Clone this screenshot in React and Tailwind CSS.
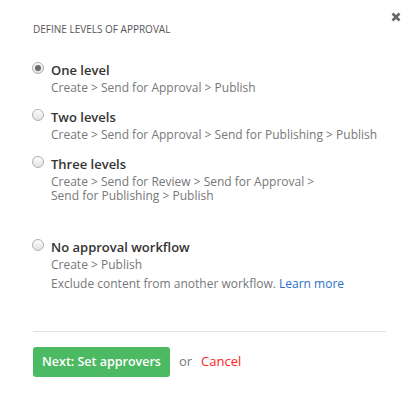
import React from "react";

const options = [
  { label: "One level", lines: ["Create > Send for Approval > Publish"], checked: true },
  { label: "Two levels", lines: ["Create > Send for Approval > Send for Publishing > Publish"] },
  {
    label: "Three levels",
    lines: ["Create > Send for Review > Send for Approval >", "Send for Publishing > Publish"],
  },
];

const Radio = ({ checked }) => (
  <span className="ml-[-1px] mt-[1px] flex h-[12px] w-[12px] shrink-0 items-center justify-center rounded-full border border-[#b0b0b0] bg-gradient-to-b from-[#fdfdfd] to-[#e2e2e2]">
    {checked && <span className="h-[6px] w-[6px] rounded-full bg-[#6b6b6b]" />}
  </span>
);

export default function App() {
  return (
    <div className="relative h-[405px] w-[416px] bg-white font-['Open_Sans',sans-serif]">
      <button className="absolute right-[15px] top-[12px] text-[#666]">
        <svg width="10" height="10" viewBox="0 0 10 10">
          <path d="M1.5 1.5 L8.5 8.5 M8.5 1.5 L1.5 8.5" stroke="#666" strokeWidth="2.6" strokeLinecap="butt" />
        </svg>
      </button>

      <div className="px-[33px] pt-[21px]">
        <h2 className="text-[10px] uppercase leading-[16px] text-[#555]">Define levels of approval</h2>

        <div className="mt-[24px] flex flex-col gap-[13px]">
          {options.map((o) => (
            <div key={o.label} className="flex gap-[7px]">
              <Radio checked={o.checked} />
              <div>
                <div className="text-[13px] font-semibold leading-[18px] text-[#333]">{o.label}</div>
                <div className="mt-[2px]">
                  {o.lines.map((l) => (
                    <div key={l} className="text-[12px] leading-[14px] text-[#777]">
                      {l}
                    </div>
                  ))}
                </div>
              </div>
            </div>
          ))}
        </div>

        <div className="mt-[35px] flex gap-[7px]">
          <Radio />
          <div>
            <div className="text-[13px] font-semibold leading-[18px] text-[#333]">No approval workflow</div>
            <div className="mt-[2px] text-[12px] leading-[14px] text-[#777]">Create &gt; Publish</div>
            <div className="mt-[5px] text-[12px] leading-[14px] text-[#777]">
              Exclude content from another workflow. <a className="text-[#2a6fc9]">Learn more</a>
            </div>
          </div>
        </div>

        <div className="mt-[40px] mr-[-3px] border-t border-[#e2e2e2]" />

        <div className="mt-[15px] flex items-center gap-[9px]">
          <button className="h-[30px] rounded-[3px] bg-[#4cb963] px-[9px] text-[12.5px] font-semibold text-white">
            Next: Set approvers
          </button>
          <span className="text-[13px] text-[#777]">or</span>
          <a className="text-[13px] text-[#f22]">Cancel</a>
        </div>
      </div>
    </div>
  );
}
